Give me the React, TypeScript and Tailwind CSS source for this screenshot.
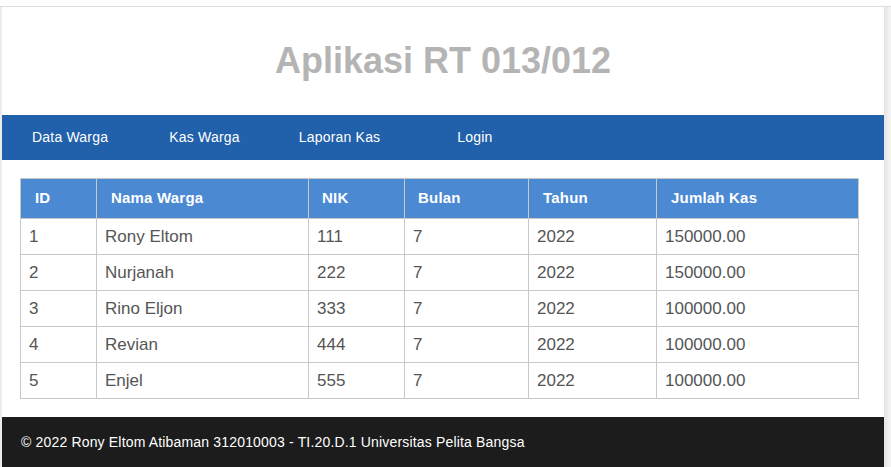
import React from 'react';

type Kas = {
  id: number;
  nama: string;
  nik: string;
  bulan: string;
  tahun: string;
  jumlah: string;
};

const data: Kas[] = [
  { id: 1, nama: 'Rony Eltom', nik: '111', bulan: '7', tahun: '2022', jumlah: '150000.00' },
  { id: 2, nama: 'Nurjanah', nik: '222', bulan: '7', tahun: '2022', jumlah: '150000.00' },
  { id: 3, nama: 'Rino Eljon', nik: '333', bulan: '7', tahun: '2022', jumlah: '100000.00' },
  { id: 4, nama: 'Revian', nik: '444', bulan: '7', tahun: '2022', jumlah: '100000.00' },
  { id: 5, nama: 'Enjel', nik: '555', bulan: '7', tahun: '2022', jumlah: '100000.00' },
];

const App: React.FC = () => {
  return (
    <div className="min-h-screen bg-white pt-[6px] font-['Liberation_Sans',Arial,sans-serif]">
      <div className="flex border-t border-[#dedede] bg-[#ececec]">
        <div className="ml-[2px] w-[882px] bg-white">
          {/* Header */}
          <header className="flex h-[108px] items-center justify-center">
            <h1 className="text-[36px] font-bold text-[#b4b4b4]">Aplikasi RT 013/012</h1>
          </header>

          {/* Nav */}
          <nav className="flex h-[45px] items-center bg-[#2160aa] text-[14px] tracking-[0.2px] text-white">
            <a className="pl-[30px] pr-[61px]">Data Warga</a>
            <a className="pr-[59px]">Kas Warga</a>
            <a className="pr-[77px]">Laporan Kas</a>
            <a>Login</a>
          </nav>

          {/* Table */}
          <div className="px-[18px] pt-[18px] pb-[18px]">
            <table className="w-[838px] table-fixed border-collapse text-[17px] text-[#555]">
              <colgroup>
                <col className="w-[76px]" />
                <col className="w-[212px]" />
                <col className="w-[96px]" />
                <col className="w-[124px]" />
                <col className="w-[128px]" />
                <col className="w-[202px]" />
              </colgroup>
              <thead>
                <tr className="h-[40px] bg-[#4b89d3] text-left text-[15px] font-bold tracking-[0.2px] text-white">
                  <th className="border border-[#c8c8c8] pl-[14px]">ID</th>
                  <th className="border border-[#c8c8c8] pl-[14px]">Nama Warga</th>
                  <th className="border border-[#c8c8c8] pl-[13px]">NIK</th>
                  <th className="border border-[#c8c8c8] pl-[13px]">Bulan</th>
                  <th className="border border-[#c8c8c8] pl-[14px]">Tahun</th>
                  <th className="border border-[#c8c8c8] pl-[14px]">Jumlah Kas</th>
                </tr>
              </thead>
              <tbody>
                {data.map((row) => (
                  <tr key={row.id} className="h-[36px]">
                    <td className="border border-[#c8c8c8] pl-[8px]">{row.id}</td>
                    <td className="border border-[#c8c8c8] pl-[8px]">{row.nama}</td>
                    <td className="border border-[#c8c8c8] pl-[8px]">{row.nik}</td>
                    <td className="border border-[#c8c8c8] pl-[8px]">{row.bulan}</td>
                    <td className="border border-[#c8c8c8] pl-[8px]">{row.tahun}</td>
                    <td className="border border-[#c8c8c8] pl-[8px]">{row.jumlah}</td>
                  </tr>
                ))}
              </tbody>
            </table>
          </div>

          {/* Footer */}
          <footer className="flex h-[50px] items-center bg-[#1c1c1c] pl-[19px] text-[14px] tracking-[0.17px] text-white">
            © 2022 Rony Eltom Atibaman 312010003 - TI.20.D.1 Universitas Pelita Bangsa
          </footer>
        </div>
        <div className="flex-1 bg-gradient-to-r from-[#e4e4e4] to-[#f6f6f6]" />
      </div>
    </div>
  );
};

export default App;
